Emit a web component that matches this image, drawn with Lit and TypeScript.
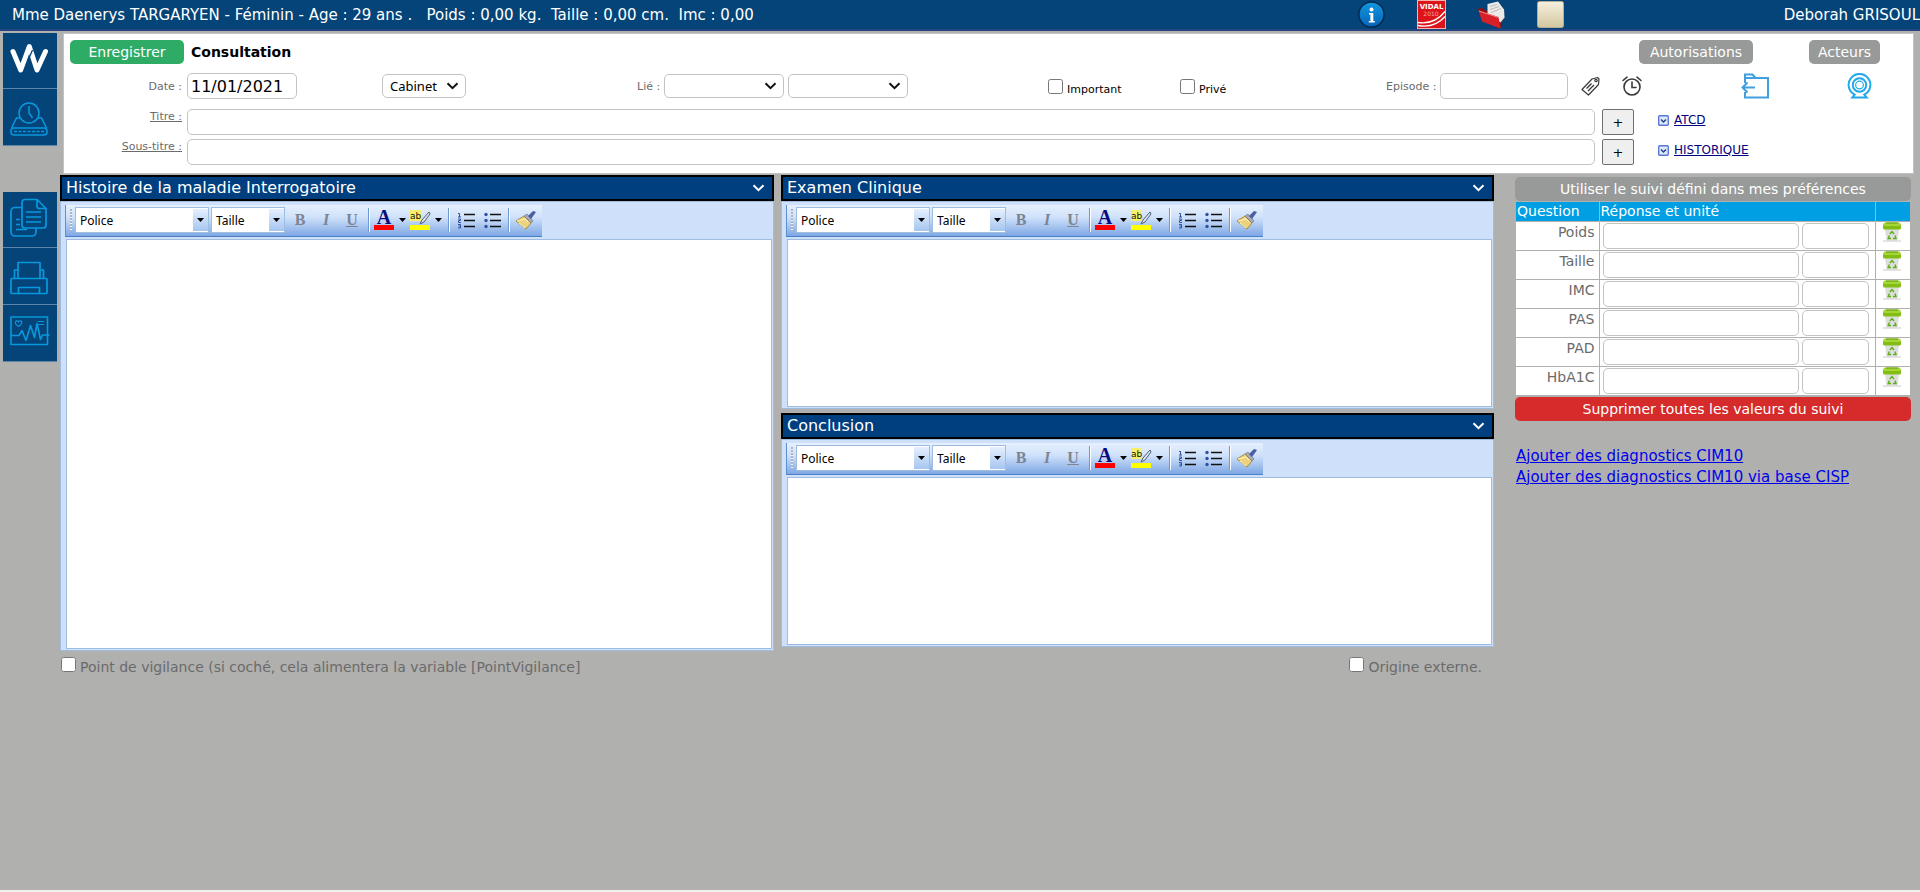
import { LitElement, html, css, svg } from "lit";
import { customElement, property } from "lit/decorators.js";

/* ---------- shared look of text boxes, drop-downs and buttons ---------- */
const controls = css`
  *,
  *::before,
  *::after {
    box-sizing: border-box;
  }
  button,
  input,
  select,
  textarea {
    margin: 0;
    font-family: inherit;
  }
  svg {
    display: block;
    flex: none;
    overflow: visible;
  }
  .field {
    height: 26px;
    min-width: 0;
    padding: 0 3px;
    border: 1px solid #c3c3c3;
    border-radius: 5px;
    background: #fff;
    color: #000;
    font-size: 16px;
  }
  .pill {
    height: 24px;
    border: 0;
    border-radius: 5px;
    padding: 0;
    color: #fff;
    background: #979a98;
    font-size: 14px;
    line-height: 24px;
    text-align: center;
  }
  .check {
    width: 15px;
    height: 15px;
    flex: none;
  }
  .icon-button {
    display: block;
    border: 0;
    padding: 0;
    background: none;
  }
`;

/* ---------- sidebar drawings ---------- */
const logo = svg`<svg width="54" height="56" viewBox="0 0 54 56" aria-hidden="true">
  <path d="M10 18.500 17.700 37 26.300 13.500 34 37 42.500 18.500" fill="none" stroke="#fff" stroke-width="5" stroke-linecap="round" stroke-linejoin="round"/>
  <path d="M24.600 28.500 29.500 17" stroke="#054478" stroke-width="1.300"/></svg>`;
const history = svg`<svg width="54" height="56" viewBox="0 0 54 56" fill="none" stroke="#0998dd" stroke-width="1.500" aria-hidden="true">
  <circle cx="26" cy="24" r="10"/><path d="M26 17v7l3.500 5"/>
  <path d="M17 29h-3.500L8.500 39M35 29h3.500l5 10"/>
  <rect x="8" y="39" width="36" height="7" rx="3"/><path d="M11 42.500h30" stroke-dasharray="3 1.500"/></svg>`;
const documents = svg`<svg width="54" height="56" viewBox="0 0 54 56" fill="none" stroke="#0998dd" stroke-width="1.700" stroke-linejoin="round" aria-hidden="true">
  <path d="M34 7.500H22a3 3 0 0 0-3 3V33a3 3 0 0 0 3 3h18a3 3 0 0 0 3-3V16.500zM34 7.500V14a2.500 2.500 0 0 0 2.500 2.500H43"/>
  <path d="M19 15.500h-7a4 4 0 0 0-4 4V40a4 4 0 0 0 4 4h17a4 4 0 0 0 4-4v-4"/>
  <path d="M23 20h15M23 25h15M23 30h15M13 27.500h4M13 32.500h4M13 37.500h11" stroke-width="1.300"/></svg>`;
const printer = svg`<svg width="54" height="56" viewBox="0 0 54 56" fill="none" stroke="#0998dd" stroke-width="1.700" stroke-linejoin="round" aria-hidden="true">
  <path d="M15 30V14.500h22V30M15 22h-3.500v8M37 22h3.500v8"/>
  <rect x="8" y="30.500" width="36" height="15" rx="1"/><path d="M15.500 45v-5.500h21V45"/></svg>`;
const monitor = svg`<svg width="54" height="56" viewBox="0 0 54 56" fill="none" stroke="#0998dd" stroke-width="1.600" stroke-linejoin="round" aria-hidden="true">
  <rect x="8" y="12" width="36.500" height="27.500"/>
  <path d="M8 30.500h8l3-5 4 10 4.500-15 4 12 2.500-14 3.500 16 2-4.500h7"/>
  <path d="M15.500 21.500c-3-2-3.500-3.500-3-4.800.8-1.500 2.500-1 3 .3.500-1.300 2.500-1.800 3.200-.3.500 1.300-.7 3-3.200 4.800zM35 16.500h6M35 19.500h6" stroke-width="1.200"/></svg>`;

/* ---------- header drawings ---------- */
const infoIcon = svg`<svg width="27" height="27" viewBox="0 0 27 27" aria-hidden="true">
  <defs><linearGradient id="ig" x1="0" y1="0" x2="0" y2="1"><stop offset="0" stop-color="#1298e0"/><stop offset="1" stop-color="#0763b8"/></linearGradient></defs>
  <circle cx="13.500" cy="13.500" r="12.600" fill="url(#ig)" stroke="#03294f" stroke-width="1.500"/>
  <circle cx="13.500" cy="8.500" r="2" fill="#fff"/><path d="M11 12h4.300v8h1.500v1.500h-6V20h1.600v-6.500H11z" fill="#fff"/></svg>`;
const vidalIcon = svg`<svg width="29" height="29" viewBox="0 0 29 29" aria-hidden="true">
  <rect width="29" height="29" fill="#f2b3ad"/><rect x="1" y="1" width="27" height="27" fill="#dc1419"/>
  <text x="14.500" y="8.500" text-anchor="middle" font-family="DejaVu Sans" font-weight="bold" font-size="7" fill="#fff">VIDAL</text>
  <text x="14" y="16" text-anchor="middle" font-family="DejaVu Sans" font-size="6" fill="#f6a9a4">2010</text>
  <path d="M1 22.500c10 1.500 19-1 27-11M1 25.500c11 2 20-1 27-9" fill="none" stroke="#fff" stroke-width="1.300"/></svg>`;
const redFolder = svg`<svg width="27" height="28" viewBox="0 0 27 28" aria-hidden="true">
  <path d="M0 8 4 6.500l3 3 12-1 7.500 2-3.500 15-2 2L4 19z" fill="#8f1015"/>
  <path d="M9.500 3 20 .5 26 8.500l.5 8-4 5-13-8z" fill="#eceae8"/>
  <path d="M12 5.500l7-2M12 8.500l9-3M13 11.500l10-4" stroke="#bdbab8"/>
  <path d="M.5 9.500 20.500 16 22.500 27.500 4 20.500z" fill="#d8202a"/><path d="M1 10 20.500 16.500" stroke="#f58a88"/></svg>`;
const noteIcon = svg`<svg width="27" height="27" viewBox="0 0 27 27" aria-hidden="true">
  <defs><linearGradient id="ng" x1="0" y1="0" x2="0" y2="1"><stop offset="0" stop-color="#f6f0de"/><stop offset="1" stop-color="#d3c7a0"/></linearGradient></defs>
  <rect x=".5" y=".5" width="26" height="26" rx="2" fill="url(#ng)" stroke="#b5ae97"/></svg>`;

/* ---------- form drawings ---------- */
const tagIcon = svg`<svg width="19" height="20" viewBox="0 0 19 20" fill="none" stroke="#3a3a3a" stroke-width="1.200" stroke-linejoin="round" aria-hidden="true">
  <path d="M1 13.500 11 3 16.500 1.500 18 3 17.500 8.500 7.500 19z"/><circle cx="15" cy="4.500" r="1.200"/>
  <path d="M5.500 12.500l5-5M7 15l6-6" stroke-width="1.400"/></svg>`;
const clockIcon = svg`<svg width="20" height="20" viewBox="0 0 20 20" fill="none" stroke="#3a3a3a" stroke-width="1.600" stroke-linecap="round" aria-hidden="true">
  <circle cx="10" cy="11" r="8"/><path d="M10 6v5.500h4M1 4.500 5 1.200M19 4.500 15 1.200"/></svg>`;
const folderBack = svg`<svg width="28" height="26" viewBox="0 0 28 26" fill="none" stroke="#3f9fe0" stroke-width="2" aria-hidden="true">
  <path d="M4 10V1.500h7.500l3 3.500H27v19.500H4V19M4 5h10"/><path d="M14 14.500H1.500M6.500 9.500l-5 5 5 5"/></svg>`;
const webcam = svg`<svg width="25" height="26" viewBox="0 0 25 27" fill="none" stroke="#1fa8e8" stroke-width="2" aria-hidden="true">
  <path d="M7.500 22.500A11.300 11.300 0 1 1 17.500 22.500L20 25.500H5z"/><circle cx="12.500" cy="12.500" r="7"/><circle cx="12.500" cy="12.500" r="4" stroke-width="1.200"/></svg>`;
const expandIcon = svg`<svg width="11" height="11" viewBox="0 0 11 11" aria-hidden="true">
  <rect x=".7" y=".7" width="9.600" height="9.600" rx="1" fill="#dfe8fb" stroke="#5a78d6" stroke-width="1.400"/>
  <path d="M3 4.500 5.500 7 8 4.500" fill="none" stroke="#27408b" stroke-width="1.500"/></svg>`;
const binIcon = svg`<svg width="18" height="20" viewBox="0 0 18 20" aria-hidden="true">
  <path d="M2 7h14L14.500 18.500h-11z" fill="#dcdfdc"/><path d="M0 19h18" stroke="#c9c9c9"/>
  <rect y="2" width="18" height="5.500" rx="1.500" fill="#83bd14"/><rect x=".5" y=".5" width="17" height="3.500" rx="1.500" fill="#a4d637"/><path d="M3 1h12" stroke="#5f9a0b"/>
  <path d="M6.800 12 9 9.500l2 2.500M12 13.500l1 3h-3M8 16.500H5.200l1.200-3" fill="none" stroke="#5fae17" stroke-width="1.400"/></svg>`;
const chevron = (color: string) => svg`<svg class="chevron" width="13" height="8" viewBox="0 0 13 8" aria-hidden="true">
  <path d="M1.500 1.300 6.500 6.200 11.500 1.300" fill="none" stroke=${color} stroke-width="2"/></svg>`;

/* ---------- rich text editor ---------- */
@customElement("rich-editor")
export class RichEditor extends LitElement {
  @property() heading = "";
  @property() size = "small";

  static styles = [
    controls,
    css`
      :host {
        display: block;
      }
      .title {
        display: flex;
        align-items: center;
        justify-content: space-between;
        height: 26px;
        margin: 0;
        padding: 0 7px 0 4px;
        border: 2px solid #000;
        background: #003f7f;
        color: #fff;
        font-size: 16px;
        font-weight: normal;
        line-height: 20px;
      }
      .frame {
        padding: 3px 1px 1px 4px;
        border: 1px solid #9ebde0;
        background: #cfe1fa;
      }
      .toolbar {
        display: inline-flex;
        align-items: center;
        vertical-align: top;
        height: 32px;
        padding: 0 3px 1px 4px;
        border-left: 1px solid #5e90cf;
        border-bottom: 1px solid #4a80c4;
        background: linear-gradient(#e6f0fd, #cfe1fa 40%, #7ea7e4);
      }
      .grip {
        width: 2px;
        height: 22px;
        margin-right: 3px;
        background: repeating-linear-gradient(#a9b4c6 0 2px, #eef4fd 2px 3px);
      }
      .combo {
        display: grid;
        grid-template-columns: 1fr 15px;
        align-items: stretch;
        height: 26px;
        margin-right: 2px;
        border: 1px solid #9ebde0;
        background: #fff;
      }
      .combo select {
        grid-area: 1 / 1 / 2 / 3;
        width: 100%;
        appearance: none;
        border: 0;
        padding: 0 0 0 4px;
        background: none;
        color: #000;
        font-family: "Noto Sans", sans-serif;
        font-size: 12px;
      }
      .combo .arrow {
        grid-area: 1 / 2 / 2 / 3;
        display: grid;
        place-items: center;
        margin: 1px 0;
        background: linear-gradient(#e6f0fd, #a5c5f0);
        pointer-events: none;
      }
      .font {
        width: 134px;
      }
      .points {
        width: 74px;
      }
      .tool {
        width: 26px;
        height: 26px;
        display: grid;
        place-items: center;
      }
      .tint {
        width: 22px;
      }
      .menu {
        width: 14px;
        padding-left: 4px;
      }
      .letter {
        color: #7c8493;
        font-family: "Liberation Serif", serif;
        font-size: 16px;
        font-weight: bold;
      }
      .italic {
        font-style: italic;
      }
      .underline {
        text-decoration: underline;
      }
      .rule {
        width: 2px;
        height: 24px;
        margin: 0 3px;
        border-left: 1px solid #6b9ad2;
        border-right: 1px solid #fff;
      }
      .entry {
        padding-left: 1px;
      }
      .text {
        display: block;
        width: 100%;
        height: 168px;
        margin-top: 2px;
        padding: 4px;
        border: 1px solid #9ebde0;
        border-radius: 0;
        outline: 0;
        resize: none;
        background: #fff;
        font-size: 14px;
      }
      .large .text {
        height: 410px;
      }
    `,
  ];

  render() {
    const arrow = svg`<svg width="7" height="4" viewBox="0 0 7 4" aria-hidden="true"><path d="M0 0h7L3.500 4z" fill="#000"/></svg>`;
    return html`
      <h2 class="title"><span>${this.heading}</span>${chevron("#fff")}</h2>
      <div class="frame ${this.size}">
        <div class="toolbar" role="toolbar">
          <span class="grip"></span>
          <span class="combo font"><select aria-label="Police"><option>Police</option></select><span class="arrow">${arrow}</span></span>
          <span class="combo points"><select aria-label="Taille"><option>Taille</option></select><span class="arrow">${arrow}</span></span>
          <button class="icon-button tool letter">B</button>
          <button class="icon-button tool letter italic">I</button>
          <button class="icon-button tool letter underline">U</button>
          <span class="rule"></span>
          <button class="icon-button tool tint" aria-label="Couleur du texte">
            <svg width="20" height="20" viewBox="0 0 20 20">
              <text x="10" y="14" text-anchor="middle" font-family="Liberation Serif" font-weight="bold" font-size="20" fill="#0a0a80">A</text>
              <rect y="15" width="20" height="5" fill="#f00"/>
            </svg>
          </button>
          <button class="icon-button menu" aria-label="Choisir la couleur du texte">${arrow}</button>
          <button class="icon-button tool tint" aria-label="Surlignage">
            <svg width="20" height="20" viewBox="0 0 20 20">
              <rect width="11" height="11" fill="#f7ef6c"/>
              <text x="0" y="9" font-family="DejaVu Sans" font-size="9" fill="#111">ab</text>
              <path d="M19 2 12 10l-2 4 4-2 6-8z" fill="#dfe6ef" stroke="#4d5d78" stroke-width="1"/>
              <rect y="15" width="20" height="5" fill="#ff0"/>
            </svg>
          </button>
          <button class="icon-button menu" aria-label="Choisir le surlignage">${arrow}</button>
          <span class="rule"></span>
          <button class="icon-button tool" aria-label="Liste numérotée">
            <svg width="18" height="17" viewBox="0 0 18 17">
              <path d="M7 2.500h11M7 8.500h11M7 14.500h11" stroke="#111" stroke-width="1.500"/>
              <path d="M1 1.500h1.500V5M1 5h3M1 7h2.500v1.500H1.500V10.500H4M1 12.500h2.500v3.500H1M1.500 14.200h2" fill="none" stroke="#3350a0"/>
            </svg>
          </button>
          <button class="icon-button tool" aria-label="Liste à puces">
            <svg width="17" height="17" viewBox="0 0 17 17">
              <path d="M6 2.500h11M6 8.500h11M6 14.500h11" stroke="#111" stroke-width="1.500"/>
              <g fill="#3350a0"><circle cx="2" cy="2.500" r="1.700"/><circle cx="2" cy="8.500" r="1.700"/><circle cx="2" cy="14.500" r="1.700"/></g>
            </svg>
          </button>
          <span class="rule"></span>
          <button class="icon-button tool" aria-label="Effacer la mise en forme">
            <svg width="20" height="18" viewBox="0 0 20 18">
              <path d="M0 10 8 5l7 7-5 6z" fill="#ecd27a" stroke="#9b7a2a" stroke-width=".8"/>
              <path d="M3 12l6 5M1 10l8-2 3 3" stroke="#fff4c2" fill="none"/>
              <path d="M8 5 11 3l6 7-2 2z" fill="#a9abb3" stroke="#6b6d78" stroke-width=".6"/>
              <path d="M12 5 17 0l3 1-5 7z" fill="#4a5ea3"/>
            </svg>
          </button>
        </div>
        <div class="entry"><textarea class="text" aria-label=${this.heading}></textarea></div>
      </div>
    `;
  }
}

/* ---------- follow-up table ---------- */
@customElement("follow-up")
export class FollowUp extends LitElement {
  static styles = [
    controls,
    css`
      :host {
        display: block;
        color: #6b6b6b;
        font-size: 14px;
      }
      .pill {
        display: block;
        width: 100%;
      }
      .danger {
        background: #d52b2b;
      }
      .grid {
        width: calc(100% - 2px);
        margin: 1px;
        border-collapse: collapse;
        table-layout: fixed;
        background: #fff;
      }
      .head th {
        height: 19px;
        padding: 0 1px;
        background: #009fe3;
        color: #fff;
        font-weight: normal;
        line-height: 18px;
        text-align: left;
      }
      .grid th,
      .grid td {
        border: 1px solid #b0b0ae;
        border-width: 0 0 1px 1px;
      }
      .grid th:first-child {
        border-left: 0;
      }
      .question {
        width: 83px;
      }
      .action {
        width: 35px;
      }
      .name {
        padding: 2px 4px 0 0;
        font-weight: normal;
        text-align: right;
        vertical-align: top;
      }
      .cell {
        height: 29px;
        padding: 1px 3px;
      }
      .pair {
        display: flex;
        gap: 3px;
        padding-right: 3px;
      }
      .answer {
        flex: 1;
      }
      .unit {
        width: 67px;
      }
      .trash {
        padding: 0 7px;
        vertical-align: top;
      }
      .links {
        display: grid;
        justify-items: start;
        margin: 25px 1px 0;
        font-size: 15px;
        line-height: 21px;
      }
      .links a {
        color: #0000ee;
      }
    `,
  ];

  render() {
    const rows = ["Poids", "Taille", "IMC", "PAS", "PAD", "HbA1C"];
    return html`
      <button class="pill">Utiliser le suivi défini dans mes préférences</button>
      <table class="grid">
        <thead>
          <tr class="head">
            <th class="question">Question</th>
            <th>Réponse et unité</th>
            <th class="action"></th>
          </tr>
        </thead>
        <tbody>
          ${rows.map(
            (name) => html`<tr>
              <th class="name"><label for="v-${name}">${name}</label></th>
              <td class="cell">
                <div class="pair">
                  <input class="field answer" id="v-${name}" />
                  <input class="field unit" aria-label="Unité ${name}" />
                </div>
              </td>
              <td class="trash"><button class="icon-button" aria-label="Supprimer ${name}">${binIcon}</button></td>
            </tr>`
          )}
        </tbody>
      </table>
      <button class="pill danger">Supprimer toutes les valeurs du suivi</button>
      <nav class="links">
        <a href="#cim10">Ajouter des diagnostics CIM10</a>
        <a href="#cisp">Ajouter des diagnostics CIM10 via base CISP</a>
      </nav>
    `;
  }
}

/* ---------- page ---------- */
@customElement("app-root")
export class AppRoot extends LitElement {
  static styles = [
    controls,
    css`
      :host {
        display: flex;
        flex-direction: column;
        box-sizing: border-box;
        min-height: 100vh;
        border-bottom: 2px solid #f0f0ee;
        background: #b0b0ae;
        color: #6b6b6b;
        font-family: Verdana, "DejaVu Sans", sans-serif;
        font-size: 14px;
      }
      .topbar {
        display: flex;
        align-items: center;
        height: 31px;
        padding-left: 12px;
        border-bottom: 2px solid #24437f;
        background: #054478;
        color: #fff;
        font-size: 15px;
        white-space: pre;
      }
      .shortcuts {
        display: flex;
        align-items: center;
        gap: 32px;
        margin-left: auto;
      }
      .user {
        margin-left: 220px;
      }
      .body {
        display: grid;
        grid-template-columns: 54px minmax(0, 1fr);
        padding: 2px 0 0 3px;
      }
      .sidebar {
        display: flex;
        flex-direction: column;
        gap: 46px;
      }
      .group {
        display: grid;
      }
      .nav {
        height: 57px;
        border-bottom: 1px solid #5d86aa;
        background: #054478;
      }
      .nav:first-child {
        height: 56px;
      }
      .panel {
        display: grid;
        margin: 0 6px 1px 6px;
        padding: 6px 0 8px;
        border: 1px solid #c3c3c3;
        background: #fff;
      }
      .heading {
        display: flex;
        align-items: center;
        gap: 7px;
        padding: 0 33px 0 6px;
      }
      .heading h1 {
        margin: 0 auto 0 0;
        color: #000;
        font-size: 14px;
      }
      .save {
        width: 114px;
        background: #2eac66;
      }
      .rights {
        width: 114px;
      }
      .actors {
        width: 71px;
        margin-left: 49px;
      }
      .row {
        display: grid;
        grid-template-columns: 123px minmax(0, 1fr);
        font-size: 11px;
      }
      .details {
        grid-template-columns:
          123px minmax(0, 195fr) minmax(0, 255fr) minmax(0, 411fr) minmax(0, 132fr) minmax(0, 206fr)
          minmax(0, 355fr) minmax(0, 106fr) minmax(0, 66fr);
        align-items: center;
        margin: 9px 0 10px;
      }
      .label {
        padding: 1px 5px 0 0;
        text-align: right;
      }
      .cluster {
        display: flex;
        align-items: center;
        gap: 4px;
      }
      .flag {
        color: #000;
      }
      .flag label {
        padding-top: 6px;
      }
      .date {
        width: 110px;
      }
      .select {
        display: grid;
        grid-template-columns: 1fr 20px;
        align-items: center;
      }
      .select select {
        grid-area: 1 / 1 / 2 / 3;
        width: 100%;
        height: 24px;
        padding: 0 7px;
        appearance: none;
        font-family: "Noto Sans", sans-serif;
        font-size: 13px;
      }
      .select .chevron {
        grid-area: 1 / 2 / 2 / 3;
        pointer-events: none;
      }
      .place {
        width: 84px;
      }
      .link-kind {
        width: 120px;
      }
      .episode {
        width: 128px;
      }
      .icons {
        display: flex;
        gap: 22px;
        padding-left: 9px;
      }
      .line {
        align-items: start;
        margin-bottom: 4px;
      }
      .line:last-child {
        margin-bottom: 0;
      }
      .line .label {
        text-decoration: underline;
      }
      .entry {
        display: grid;
        grid-template-columns: minmax(0, 1fr) 32px 272px;
        column-gap: 7px;
        align-items: start;
      }
      .plus {
        height: 26px;
        padding: 0;
        border: 1px solid #6f6f6f;
        border-radius: 2px;
        background: #efefef;
        color: #000;
        font-size: 13px;
      }
      .more {
        display: flex;
        align-items: center;
        gap: 5px;
        padding: 4px 0 0 17px;
        font-size: 12px;
      }
      .more a {
        color: #000080;
      }
      .work {
        display: grid;
        grid-template-columns: minmax(0, 714fr) minmax(0, 713fr) 410px;
        column-gap: 7px;
        margin: 0 9px 0 3px;
      }
      .column {
        display: flex;
        flex-direction: column;
        gap: 4px;
      }
      .column-follow {
        margin: 2px 0 0 14px;
      }
      .notes {
        display: flex;
        justify-content: space-between;
        margin: 6px 438px 0 4px;
      }
      .notes label {
        padding-top: 2px;
      }
      .note {
        display: flex;
        align-items: start;
        gap: 4px;
      }
    `,
  ];

  render() {
    return html`
      <header class="topbar">
        <span>Mme Daenerys TARGARYEN - Féminin - Age : 29 ans .   Poids : 0,00 kg.  Taille : 0,00 cm.  Imc : 0,00</span>
        <div class="shortcuts"><button class="icon-button" aria-label="Informations">${infoIcon}</button><button class="icon-button" aria-label="Vidal">${vidalIcon}</button><button class="icon-button" aria-label="Dossier">${redFolder}</button><button class="icon-button" aria-label="Note">${noteIcon}</button></div>
        <span class="user">Deborah GRISOUL</span>
      </header>
      <div class="body">
        <nav class="sidebar">
          <div class="group">
            <button class="icon-button nav" aria-label="Accueil">${logo}</button>
            <button class="icon-button nav" aria-label="Historique">${history}</button>
          </div>
          <div class="group">
            <button class="icon-button nav" aria-label="Documents">${documents}</button>
            <button class="icon-button nav" aria-label="Imprimer">${printer}</button>
            <button class="icon-button nav" aria-label="Mesures">${monitor}</button>
          </div>
        </nav>
        <main>
          <section class="panel">
            <div class="heading">
              <button class="pill save">Enregistrer</button>
              <h1>Consultation</h1>
              <button class="pill rights">Autorisations</button>
              <button class="pill actors">Acteurs</button>
            </div>
            <div class="row details">
              <label class="label" for="date">Date :</label>
              <input class="field date" id="date" value="11/01/2021" />
              <div class="select place">
                <select class="field" aria-label="Lieu"><option>Cabinet</option></select>${chevron("#111")}
              </div>
              <div class="cluster">
                <label for="linked">Lié :</label>
                <div class="select link-kind"><select class="field" id="linked"><option></option></select>${chevron("#111")}</div>
                <div class="select link-kind"><select class="field" aria-label="Lié à"><option></option></select>${chevron("#111")}</div>
              </div>
              <div class="cluster flag"><input class="check" type="checkbox" id="important" /><label for="important">Important</label></div>
              <div class="cluster flag"><input class="check" type="checkbox" id="private" /><label for="private">Privé</label></div>
              <div class="cluster">
                <label for="episode">Episode :</label>
                <input class="field episode" id="episode" />
                <div class="icons">
                  <button class="icon-button" aria-label="Étiquette">${tagIcon}</button>
                  <button class="icon-button" aria-label="Rappel">${clockIcon}</button>
                </div>
              </div>
              <button class="icon-button" aria-label="Importer">${folderBack}</button>
              <button class="icon-button" aria-label="Webcam">${webcam}</button>
            </div>
            <div class="row line">
              <label class="label" for="title">Titre :</label>
              <div class="entry">
                <input class="field" id="title" /><button class="plus">+</button>
                <div class="more">${expandIcon}<a href="#atcd">ATCD</a></div>
              </div>
            </div>
            <div class="row line">
              <label class="label" for="subtitle">Sous-titre :</label>
              <div class="entry">
                <input class="field" id="subtitle" /><button class="plus">+</button>
                <div class="more">${expandIcon}<a href="#historique">HISTORIQUE</a></div>
              </div>
            </div>
          </section>
          <section class="work">
            <div class="column"><rich-editor heading="Histoire de la maladie Interrogatoire" size="large"></rich-editor></div>
            <div class="column">
              <rich-editor heading="Examen Clinique"></rich-editor>
              <rich-editor heading="Conclusion"></rich-editor>
            </div>
            <follow-up class="column-follow"></follow-up>
          </section>
          <div class="notes">
            <div class="note"><input class="check" type="checkbox" id="vigilance" /><label for="vigilance">Point de vigilance (si coché, cela alimentera la variable [PointVigilance]</label></div>
            <div class="note"><input class="check" type="checkbox" id="outside" /><label for="outside">Origine externe.</label></div>
          </div>
        </main>
      </div>
    `;
  }
}
